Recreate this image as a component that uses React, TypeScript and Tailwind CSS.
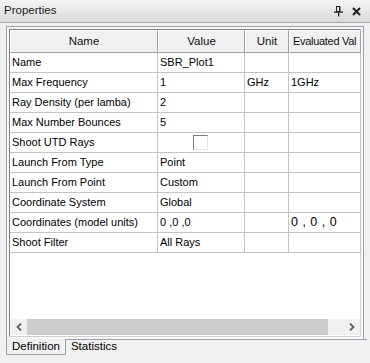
import React from "react";

const font = { fontFamily: '"Liberation Sans", Arial, sans-serif' };

type Row = { name: string; value?: string; unit?: string; evald?: string; check?: boolean };

const rows: Row[] = [
  { name: "Name", value: "SBR_Plot1" },
  { name: "Max Frequency", value: "1", unit: "GHz", evald: "1GHz" },
  { name: "Ray Density (per lamba)", value: "2" },
  { name: "Max Number Bounces", value: "5" },
  { name: "Shoot UTD Rays", check: true },
  { name: "Launch From Type", value: "Point" },
  { name: "Launch From Point", value: "Custom" },
  { name: "Coordinate System", value: "Global" },
  { name: "Coordinates (model units)", value: "0 ,0 ,0", evald: "0 , 0 , 0" },
  { name: "Shoot Filter", value: "All Rays" },
];

function HeaderCell({ w, children, left }: { w: string; children: React.ReactNode; left?: boolean }) {
  return (
    <div
      className={`${w} h-[23px] shrink-0 bg-[#f0f0f0] border-t border-l border-t-white border-l-white border-r border-b border-r-[#a0a0a0] border-b-[#a0a0a0] flex items-center overflow-hidden whitespace-nowrap text-[#111] ${left ? "justify-start pl-[3px] text-[11px] tracking-[-0.3px]" : "justify-center text-[11.5px]"}`}
    >
      {children}
    </div>
  );
}

export default function App() {
  return (
    <div className="w-[370px] h-[363px] bg-[#f0f0f0] flex flex-col text-black overflow-hidden" style={font}>
      {/* title bar */}
      <div className="h-[23px] shrink-0 bg-gradient-to-b from-[#f4f4f4] to-[#d9d9d9] border-b border-[#a8a8a8] flex items-center pl-[4px] pr-[6px]">
        <span className="text-[11.5px] text-[#1a1a1a] flex-1">Properties</span>
        <svg width="9" height="11" viewBox="0 0 9 11" className="mr-[9px]">
          <rect x="2.5" y="0.5" width="3" height="5" fill="none" stroke="#222" strokeWidth="1" />
          <rect x="5" y="0.5" width="1.5" height="5" fill="#222" />
          <rect x="0" y="5.5" width="9" height="1.3" fill="#222" />
          <rect x="4" y="6.5" width="1.3" height="4" fill="#222" />
        </svg>
        <svg width="9" height="9" viewBox="0 0 9 9" className="mr-[3px]">
          <path d="M1 1 L8 8 M8 1 L1 8" stroke="#222" strokeWidth="2" />
        </svg>
      </div>

      {/* frame */}
      <div className="ml-[6px] mt-[3px] w-[358px] h-[314px] border border-[#98a0ab] p-[2px] bg-[#f8f8f8]">
        <div className="w-full h-full border border-t-[#808080] border-l-[#808080] border-r-[#d0d0d0] border-b-[#d0d0d0] bg-white flex flex-col text-[11px]">
          {/* header */}
          <div className="flex">
            <HeaderCell w="w-[148px]">Name</HeaderCell>
            <HeaderCell w="w-[87px]">Value</HeaderCell>
            <HeaderCell w="w-[44px]">Unit</HeaderCell>
            <HeaderCell w="w-[72px]" left>Evaluated Val</HeaderCell>
          </div>
          {rows.map((r) => (
            <div key={r.name} className="flex h-[20px] shrink-0">
              <div className="w-[148px] shrink-0 border-r border-b border-[#c4c4c4] pl-[2px] flex items-center whitespace-nowrap overflow-hidden">
                {r.name}
              </div>
              <div className="w-[87px] shrink-0 border-r border-b border-[#c4c4c4] pl-[2px] flex items-center whitespace-nowrap overflow-hidden">
                {r.check ? (
                  <div className="ml-[33px] w-[15px] h-[15px] border border-t-[#7a7a7a] border-l-[#7a7a7a] border-r-[#e3e3e3] border-b-[#e3e3e3] bg-white" />
                ) : (
                  r.value
                )}
              </div>
              <div className="w-[44px] shrink-0 border-r border-b border-[#c4c4c4] pl-[2px] flex items-center whitespace-nowrap overflow-hidden">
                {r.unit}
              </div>
              <div className="w-[72px] shrink-0 border-r border-b border-[#c4c4c4] pl-[2px] flex items-center whitespace-nowrap overflow-hidden">
                {r.evald ? <span className={r.evald.includes(",") ? "tracking-[0.5px] text-[12.5px]" : ""}>{r.evald}</span> : null}
              </div>
            </div>
          ))}
          <div className="flex-1" />
          {/* horizontal scrollbar */}
          <div className="h-[16px] shrink-0 bg-[#f0f0f0] flex items-stretch mb-[1px]">
            <div className="w-[17px] flex items-center justify-center">
              <svg width="6" height="8" viewBox="0 0 6 8">
                <path d="M5 0.5 L1.5 4 L5 7.5" fill="none" stroke="#606060" strokeWidth="1.8" />
              </svg>
            </div>
            <div className="w-[301px] bg-[#cdcdcd]" />
            <div className="flex-1 flex items-center justify-end pr-[5px]">
              <svg width="6" height="8" viewBox="0 0 6 8">
                <path d="M1 0.5 L4.5 4 L1 7.5" fill="none" stroke="#606060" strokeWidth="1.8" />
              </svg>
            </div>
          </div>
        </div>
      </div>

      {/* tabs */}
      <div className="flex ml-[6px] -mt-[1px] text-[11.5px]">
        <div className="h-[16px] border-l border-r border-b border-[#98a0ab] bg-[#f0f0f0] pl-[5px] pr-[5px] flex items-center relative">
          Definition
        </div>
        <div className="h-[15px] pl-[5px] flex items-center border-t border-[#98a0ab] w-[301px]">
          Statistics
        </div>
      </div>
    </div>
  );
}
